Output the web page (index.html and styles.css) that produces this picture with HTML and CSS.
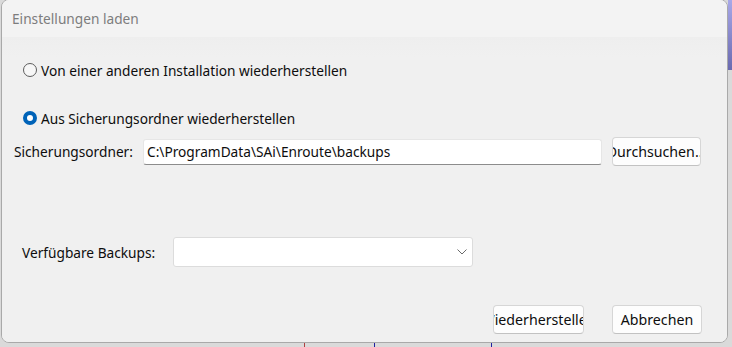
FILE: index.html
```html
<!DOCTYPE html>
<html lang="de">
<head>
<meta charset="utf-8">
<title>Einstellungen laden</title>
<link rel="stylesheet" href="styles.css">
</head>
<body>
<div class="desktop">
  <div class="tick tick-red"></div>
  <div class="tick tick-blue1"></div>
  <div class="tick tick-blue2"></div>
  <div class="edge-blue"></div>
  <div class="window">
    <div class="titlebar">Einstellungen laden</div>
    <div class="content">
      <label class="radio-row first">
        <span class="radio"></span>
        <span>Von einer anderen Installation wiederherstellen</span>
      </label>
      <label class="radio-row second">
        <span class="radio checked"></span>
        <span>Aus Sicherungsordner wiederherstellen</span>
      </label>
      <div class="folder-row">
        <span class="folder-label">Sicherungsordner:</span>
        <div class="textbox">C:\ProgramData\SAi\Enroute\backups</div>
        <div class="btn browse"><span>Durchsuchen...</span></div>
      </div>
      <div class="backups-row">
        <span class="backups-label">Verfügbare Backups:</span>
        <div class="combo">
          <svg class="chev" width="10" height="6" viewBox="0 0 10 6"><path d="M0.5 0.5 L5 5 L9.5 0.5" fill="none" stroke="#6a6a6a" stroke-width="1"/></svg>
        </div>
      </div>
      <div class="button-row">
        <div class="btn restore"><span>Wiederherstellen</span></div>
        <div class="btn cancel"><span>Abbrechen</span></div>
      </div>
    </div>
  </div>
</div>
</body>
</html>
```
FILE: styles.css
```css
html, body {
  margin: 0;
  padding: 0;
}
body {
  background: #dadada;
  width: 732px;
  height: 347px;
  overflow: hidden;
  font-family: "Noto Sans", "Open Sans", sans-serif;
  font-size: 13.7px;
  color: #0d0d0d;
}
.desktop {
  position: relative;
  width: 732px;
  height: 347px;
}
.tick {
  position: absolute;
  bottom: 0;
  width: 1px;
  height: 6px;
}
.tick-red { left: 304px; background: #b04040; }
.tick-blue1 { left: 374px; background: #2020a0; }
.tick-blue2 { left: 491px; background: #2020a0; }
.edge-blue {
  position: absolute;
  right: 0;
  top: 0;
  width: 4px;
  height: 70px;
  background: linear-gradient(#a8a8e8, #6a6ab0);
}
.window {
  position: absolute;
  left: 1px;
  top: -1px;
  width: 727px;
  height: 344px;
  box-sizing: border-box;
  border: 1px solid #a9a9a9;
  border-radius: 8px;
  background: #f0f0f0;
  overflow: hidden;
  display: flex;
  flex-direction: column;
}
.titlebar {
  height: 37px;
  flex: none;
  box-sizing: border-box;
  padding: 0 0 1px 10px;
  display: flex;
  align-items: center;
  background: #f3f3f3;
  color: #7d7d7d;
  font-size: 13.7px;
}
.content {
  flex: 1;
  display: flex;
  flex-direction: column;
  background: linear-gradient(#eeeeee, #f0f0f0 20px);
}
.radio-row {
  display: flex;
  align-items: center;
  height: 16px;
  padding-left: 21px;
  gap: 4px;
}
.radio-row.first { margin-top: 25px; }
.radio-row.second { margin-top: 32px; }
.radio {
  width: 14px;
  height: 14px;
  box-sizing: border-box;
  border-radius: 50%;
  border: 1px solid #5c5c5c;
  background: #f7f7f7;
  flex: none;
}
.radio.checked {
  border: 4px solid #0063b8;
  background: #ffffff;
}
.folder-row {
  display: flex;
  align-items: center;
  height: 29px;
  margin-top: 11px;
  padding-left: 12px;
}
.folder-label {
  width: 129px;
  flex: none;
  white-space: nowrap;
}
.textbox {
  width: 459px;
  height: 26px;
  box-sizing: border-box;
  background: #ffffff;
  border: 1px solid #e6e6e6;
  border-bottom-color: #8c8c8c;
  border-radius: 3px;
  display: flex;
  align-items: center;
  padding-left: 3px;
  flex: none;
}
.btn {
  height: 29px;
  width: 90px;
  box-sizing: border-box;
  background: #fdfdfd;
  border: 1px solid #d6d6d6;
  border-bottom-color: #c2c2c2;
  border-radius: 4px;
  display: flex;
  align-items: center;
  justify-content: center;
  overflow: hidden;
  white-space: nowrap;
  flex: none;
  font-size: 14.2px;
}
.btn span { flex: none; }
.browse {
  margin-left: 10px;
  width: 89px;
}
.backups-row {
  display: flex;
  align-items: center;
  height: 30px;
  margin-top: 71px;
  padding-left: 20px;
}
.backups-label {
  width: 151px;
  flex: none;
  white-space: nowrap;
}
.combo {
  width: 300px;
  height: 30px;
  box-sizing: border-box;
  background: #ffffff;
  border: 1px solid #dcdcdc;
  border-radius: 3px;
  display: flex;
  align-items: center;
  justify-content: flex-end;
  padding-right: 5px;
  flex: none;
}
.chev { display: block; }
.button-row {
  display: flex;
  align-items: center;
  margin-top: 37px;
  padding-left: 491px;
}
.restore { width: 91px; margin-top: 1px; }
.cancel { margin-left: 28px; }
```
